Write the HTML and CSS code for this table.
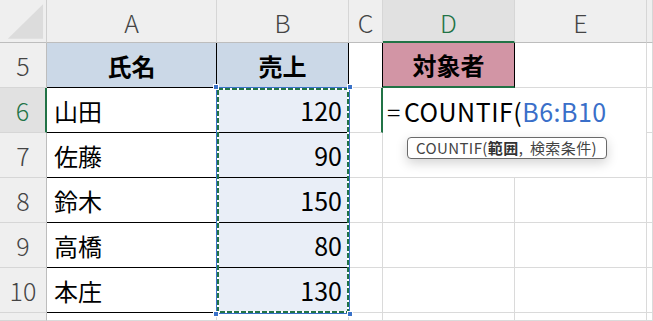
FILE: index.html
```html
<!DOCTYPE html>
<html lang="ja">
<head>
<meta charset="utf-8">
<link rel="stylesheet" href="styles.css">
</head>
<body>
<div class="sheet">
  <div class="grid">
    <div class="cell corner"><svg width="47" height="43" viewBox="0 0 47 43"><polygon points="8,39 44,39 44,4" fill="#dcdcdc"/></svg></div>
    <div class="cell colh">A</div>
    <div class="cell colh">B</div>
    <div class="cell colh">C</div>
    <div class="cell colh colh-active">D</div>
    <div class="cell colh">E</div>
    <div class="cell colh"></div>

    <div class="cell rowh">5</div>
    <div class="cell head-blue">氏名</div>
    <div class="cell head-blue">売上</div>
    <div class="cell c5"></div>
    <div class="cell head-pink">対象者</div>
    <div class="cell"></div>
    <div class="cell"></div>

    <div class="cell rowh rowh-active">6</div>
    <div class="cell name">山田</div>
    <div class="cell num">120</div>
    <div class="cell c6"></div>
    <div class="cell edit"><span class="eq">=</span>COUNTIF(<span class="ref">B6:B10</span></div>
    <div class="cell e6"></div>
    <div class="cell"></div>

    <div class="cell rowh">7</div>
    <div class="cell name">佐藤</div>
    <div class="cell num">90</div>
    <div class="cell"></div>
    <div class="cell d7"></div>
    <div class="cell"></div>
    <div class="cell"></div>

    <div class="cell rowh">8</div>
    <div class="cell name">鈴木</div>
    <div class="cell num">150</div>
    <div class="cell"></div>
    <div class="cell"></div>
    <div class="cell"></div>
    <div class="cell"></div>

    <div class="cell rowh">9</div>
    <div class="cell name">高橋</div>
    <div class="cell num">80</div>
    <div class="cell"></div>
    <div class="cell"></div>
    <div class="cell"></div>
    <div class="cell"></div>

    <div class="cell rowh">10</div>
    <div class="cell name">本庄</div>
    <div class="cell num">130</div>
    <div class="cell"></div>
    <div class="cell"></div>
    <div class="cell"></div>
    <div class="cell"></div>

    <div class="cell rowh"></div>
    <div class="cell"></div>
    <div class="cell"></div>
    <div class="cell"></div>
    <div class="cell"></div>
    <div class="cell"></div>
    <div class="cell"></div>
  </div>

  <div class="marquee">
    <svg class="dash" width="134" height="227" viewBox="0 0 134 227">
      <rect x="2" y="2" width="130" height="223" fill="none" stroke="#ffffff" stroke-width="2"/>
      <rect x="2" y="2" width="130" height="223" fill="none" stroke="#217346" stroke-width="2" stroke-dasharray="5 2"/>
    </svg>
    <span class="handle tl"></span>
    <span class="handle tr"></span>
    <span class="handle bl"></span>
    <span class="handle br"></span>
  </div>

  <div class="tip">COUNTIF(<b>範囲</b>, 検索条件)</div>
</div>
</body>
</html>
```

FILE: styles.css
```css
* { box-sizing: border-box; }
html, body { margin: 0; padding: 0; background: #fff; }
body { font-family: "Noto Sans CJK JP", "Noto Sans", sans-serif; }

.sheet {
  position: relative;
  width: 653px;
  height: 321px;
  overflow: hidden;
}

.grid {
  display: grid;
  grid-template-columns: 47px 170px 132px 34px 132px 132px 6px;
  grid-template-rows: 43px 45px 45px 45px 45px 45px 45px 8px;
}

.cell {
  border-right: 1px solid #dadada;
  border-bottom: 1px solid #dadada;
  display: flex;
  align-items: center;
  font-size: 24px;
  color: #000;
  white-space: nowrap;
  min-width: 0;
}

.corner {
  background: #efefef;
  border-right: 1px solid #cfcfcf;
  border-bottom: 1px solid #bdbdbd;
  padding: 0;
}
.corner svg { display: block; }

.colh {
  background: #efefef;
  border-right: 1px solid #d6d6d6;
  border-bottom: 1px solid #bdbdbd;
  justify-content: center;
  color: #444;
  font-size: 25px;
  font-weight: 300;
  padding-top: 2px;
}
.colh-active {
  background: #e1e1e1;
  color: #217346;
  border-bottom: 2px solid #217346;
}

.rowh {
  background: #efefef;
  border-right: 1px solid #bdbdbd;
  border-bottom: 1px solid #d6d6d6;
  justify-content: center;
  color: #444;
  font-size: 25px;
  font-weight: 300;
}
.rowh-active {
  background: #e1e1e1;
  color: #217346;
  border-right: 2px solid #217346;
}

.head-blue {
  background: #cbd8e7;
  border-right: 1px solid #000;
  border-bottom: 1px solid #000;
  justify-content: center;
  font-weight: 700;
}
.c5 { border-right: 1px solid #000; }
.head-pink {
  background: #d295a5;
  border-right: 1px solid #000;
  border-bottom: 2px solid #217346;
  justify-content: center;
  font-weight: 700;
}

.name {
  border-right: 1px solid #000;
  border-bottom: 1px solid #000;
  padding-left: 7px;
}
.num {
  background: #e9eef7;
  border-bottom: 1px solid #000;
  justify-content: flex-end;
  padding-right: 6px;
  font-size: 25px;
}

.c6 { border-right: 2px solid #217346; }
.edit {
  border-right: none;
  border-bottom: none;
  padding-left: 4px;
  overflow: visible;
  font-size: 25px;
  letter-spacing: 0.5px;
  position: relative;
  z-index: 1;
}
.edit .eq {
  font-weight: 300;
  padding-right: 3px;
}
.edit .ref { color: #3a6fc9; }
.e6 { border-bottom: none; }
.d7 { border-right: none; }

.marquee {
  position: absolute;
  left: 216px;
  top: 87px;
  width: 134px;
  height: 227px;
  border: 1px solid #3a72c8;
}
.marquee .dash {
  position: absolute;
  left: -1px;
  top: -1px;
}
.handle {
  position: absolute;
  width: 6px;
  height: 6px;
  background: #3a72c8;
  border: 1px solid #fff;
}
.handle.tl { left: -4px; top: -4px; }
.handle.tr { right: -4px; top: -4px; }
.handle.bl { left: -4px; bottom: -4px; }
.handle.br { right: -4px; bottom: -4px; }

.tip {
  position: absolute;
  left: 407px;
  top: 137px;
  width: 200px;
  height: 22px;
  border: 1px solid #6a6a6a;
  border-radius: 4px;
  background: #fff;
  box-shadow: 0 4px 12px rgba(0, 0, 0, 0.18);
  color: #444;
  font-size: 15px;
  line-height: 20px;
  padding-left: 8px;
  letter-spacing: 0.4px;
  word-spacing: 3px;
  white-space: nowrap;
  z-index: 2;
}
.tip b { font-weight: 700; color: #333; }
```
